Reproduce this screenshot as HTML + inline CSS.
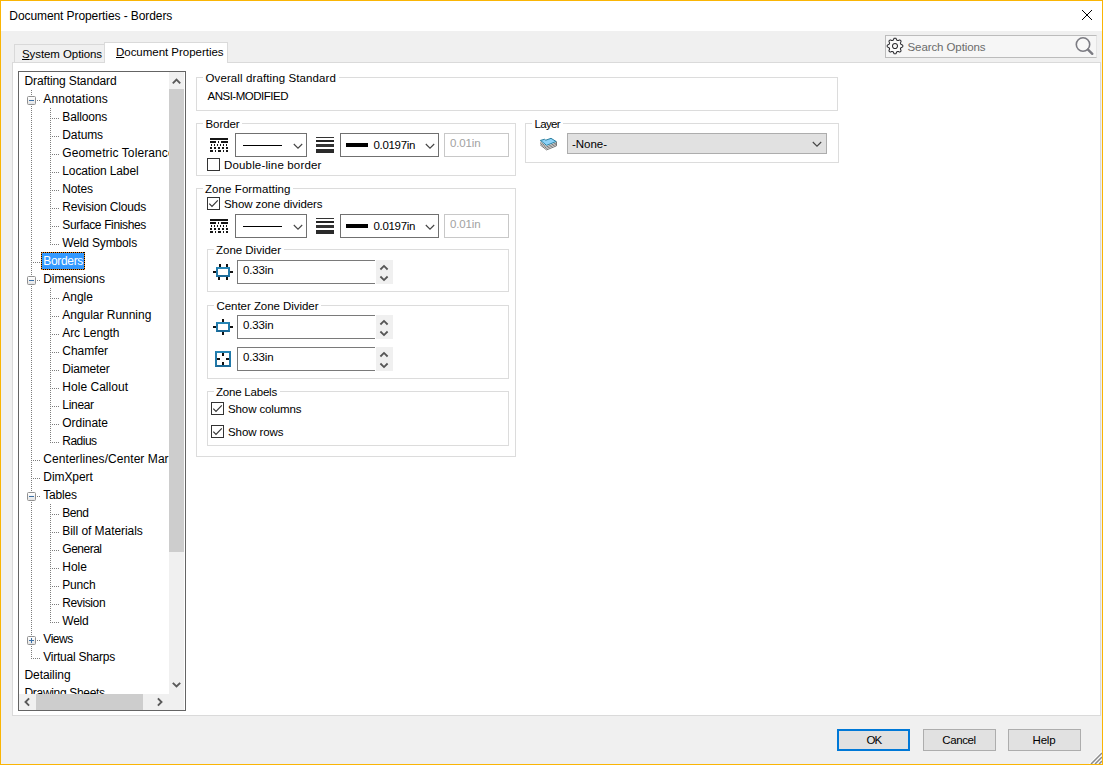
<!DOCTYPE html>
<html><head><meta charset="utf-8"><title>Document Properties - Borders</title>
<style>
html,body{margin:0;padding:0;}
body{width:1103px;height:765px;overflow:hidden;background:#f0f0f0;font-family:"Liberation Sans", Arial, sans-serif;font-size:12px;position:relative;}
div,span,svg{position:absolute;box-sizing:border-box;}
.t{white-space:pre;line-height:16px;height:16px;}
.t u{position:static;text-decoration:underline;text-underline-offset:1px;}
.gb{border:1px solid #dcdcdc;}
.lab{background:#fff;height:3px;}
.combo{border:1px solid #707070;background:#fff;}
.dis{border:1px solid #c8c8c8;background:#fff;}
.spin{border:1px solid #7a7a7a;border-right:none;background:#fff;}
.spb{background:#f0f0f0;}
.cb{border:1px solid #333;background:#fff;width:13px;height:13px;}
.btn{border:1px solid #adadad;background:#e1e1e1;}
</style></head><body>

<div style="left:0;top:0;width:1103px;height:765px;border:1px solid #fab505;"></div>
<div style="left:1px;top:1px;width:1101px;height:30px;background:#fff;"></div>
<svg style="left:1081px;top:9px" width="12" height="12" viewBox="0 0 12 12"><path d="M1 1 L11 11 M11 1 L1 11" stroke="#000" stroke-width="1" fill="none"/></svg>
<div style="left:885px;top:35px;width:212px;height:23px;border:1px solid #bcbcbc;border-right-color:#e4e4e4;background:#f6f6f6;"></div>
<svg style="left:886px;top:37px" width="18" height="18" viewBox="-9 -9 18 18">
<path id="gear" fill="#fbfbfb" stroke="#2a2a2e" stroke-width="1.05" stroke-linejoin="round" d="M0.00 7.80 L-0.31 7.79 L-0.61 7.78 L-0.90 7.65 L-1.15 7.25 L-1.36 6.82 L-1.53 6.37 L-1.68 5.97 L-1.89 5.80 L-2.11 5.72 L-2.33 5.64 L-2.55 5.54 L-2.77 5.44 L-3.03 5.41 L-3.43 5.59 L-3.86 5.78 L-4.32 5.94 L-4.77 6.05 L-5.07 5.93 L-5.29 5.73 L-5.52 5.52 L-5.73 5.29 L-5.93 5.07 L-6.05 4.77 L-5.94 4.32 L-5.78 3.86 L-5.59 3.43 L-5.41 3.03 L-5.44 2.77 L-5.54 2.55 L-5.64 2.33 L-5.72 2.11 L-5.80 1.89 L-5.97 1.68 L-6.37 1.53 L-6.82 1.36 L-7.25 1.15 L-7.65 0.90 L-7.78 0.61 L-7.79 0.31 L-7.80 0.00 L-7.79 -0.31 L-7.78 -0.61 L-7.65 -0.90 L-7.25 -1.15 L-6.82 -1.36 L-6.37 -1.53 L-5.97 -1.68 L-5.80 -1.89 L-5.72 -2.11 L-5.64 -2.33 L-5.54 -2.55 L-5.44 -2.77 L-5.41 -3.03 L-5.59 -3.43 L-5.78 -3.86 L-5.94 -4.32 L-6.05 -4.77 L-5.93 -5.07 L-5.73 -5.29 L-5.52 -5.52 L-5.29 -5.73 L-5.07 -5.93 L-4.77 -6.05 L-4.32 -5.94 L-3.86 -5.78 L-3.43 -5.59 L-3.03 -5.41 L-2.77 -5.44 L-2.55 -5.54 L-2.33 -5.64 L-2.11 -5.72 L-1.89 -5.80 L-1.68 -5.97 L-1.53 -6.37 L-1.36 -6.82 L-1.15 -7.25 L-0.90 -7.65 L-0.61 -7.78 L-0.31 -7.79 L-0.00 -7.80 L0.31 -7.79 L0.61 -7.78 L0.90 -7.65 L1.15 -7.25 L1.36 -6.82 L1.53 -6.37 L1.68 -5.97 L1.89 -5.80 L2.11 -5.72 L2.33 -5.64 L2.55 -5.54 L2.77 -5.44 L3.03 -5.41 L3.43 -5.59 L3.86 -5.78 L4.32 -5.94 L4.77 -6.05 L5.07 -5.93 L5.29 -5.73 L5.52 -5.52 L5.73 -5.29 L5.93 -5.07 L6.05 -4.77 L5.94 -4.32 L5.78 -3.86 L5.59 -3.43 L5.41 -3.03 L5.44 -2.77 L5.54 -2.55 L5.64 -2.33 L5.72 -2.11 L5.80 -1.89 L5.97 -1.68 L6.37 -1.53 L6.82 -1.36 L7.25 -1.15 L7.65 -0.90 L7.78 -0.61 L7.79 -0.31 L7.80 -0.00 L7.79 0.31 L7.78 0.61 L7.65 0.90 L7.25 1.15 L6.82 1.36 L6.37 1.53 L5.97 1.68 L5.80 1.89 L5.72 2.11 L5.64 2.33 L5.54 2.55 L5.44 2.77 L5.41 3.03 L5.59 3.43 L5.78 3.86 L5.94 4.32 L6.05 4.77 L5.93 5.07 L5.73 5.29 L5.52 5.52 L5.29 5.73 L5.07 5.93 L4.77 6.05 L4.32 5.94 L3.86 5.78 L3.43 5.59 L3.03 5.41 L2.77 5.44 L2.55 5.54 L2.33 5.64 L2.11 5.72 L1.89 5.80 L1.68 5.97 L1.53 6.37 L1.36 6.82 L1.15 7.25 L0.90 7.65 L0.61 7.78 L0.31 7.79 Z"/>
<circle cx="0" cy="0" r="2.5" fill="#f8f8f8" stroke="#2a2a2e" stroke-width="1.05"/></svg>
<svg style="left:1072px;top:35px" width="24" height="24" viewBox="0 0 24 24"><circle cx="11" cy="9.5" r="6.7" fill="#f8f8f8" stroke="#7b7b82" stroke-width="1.6"/><path d="M16 14.6 L20.3 18.8" stroke="#7b7b82" stroke-width="2.4" stroke-linecap="round"/></svg>
<div style="left:14px;top:44px;width:91px;height:19px;border:1px solid #d9d9d9;background:#f0f0f0;"></div>
<div style="left:12px;top:62px;width:1089px;height:654px;border:1px solid #dadada;background:#fff;"></div>
<div style="left:104px;top:42px;width:124px;height:21px;border:1px solid #dadada;border-bottom:none;background:#fff;"></div>
<div style="left:18px;top:71px;width:168px;height:640px;border:1px solid #646464;background:#fff;"></div>
<div style="left:19px;top:72px;width:150px;height:622px;overflow:hidden;">
<div style="left:12px;top:18px;width:1px;height:569px;background:repeating-linear-gradient(to bottom,#7d7d7d 0 1px,transparent 1px 2px);"></div>
<div style="left:31px;top:36px;width:1px;height:137px;background:repeating-linear-gradient(to bottom,#7d7d7d 0 1px,transparent 1px 2px);"></div>
<div style="left:31px;top:216px;width:1px;height:155px;background:repeating-linear-gradient(to bottom,#7d7d7d 0 1px,transparent 1px 2px);"></div>
<div style="left:31px;top:432px;width:1px;height:119px;background:repeating-linear-gradient(to bottom,#7d7d7d 0 1px,transparent 1px 2px);"></div>
<div style="left:18px;top:28px;width:3px;height:1px;background:repeating-linear-gradient(to right,#7d7d7d 0 1px,transparent 1px 2px);"></div>
<div style="left:31px;top:46px;width:9px;height:1px;background:repeating-linear-gradient(to right,#7d7d7d 0 1px,transparent 1px 2px);"></div>
<div style="left:31px;top:64px;width:9px;height:1px;background:repeating-linear-gradient(to right,#7d7d7d 0 1px,transparent 1px 2px);"></div>
<div style="left:31px;top:82px;width:9px;height:1px;background:repeating-linear-gradient(to right,#7d7d7d 0 1px,transparent 1px 2px);"></div>
<div style="left:31px;top:100px;width:9px;height:1px;background:repeating-linear-gradient(to right,#7d7d7d 0 1px,transparent 1px 2px);"></div>
<div style="left:31px;top:118px;width:9px;height:1px;background:repeating-linear-gradient(to right,#7d7d7d 0 1px,transparent 1px 2px);"></div>
<div style="left:31px;top:136px;width:9px;height:1px;background:repeating-linear-gradient(to right,#7d7d7d 0 1px,transparent 1px 2px);"></div>
<div style="left:31px;top:154px;width:9px;height:1px;background:repeating-linear-gradient(to right,#7d7d7d 0 1px,transparent 1px 2px);"></div>
<div style="left:31px;top:172px;width:9px;height:1px;background:repeating-linear-gradient(to right,#7d7d7d 0 1px,transparent 1px 2px);"></div>
<div style="left:14px;top:190px;width:7px;height:1px;background:repeating-linear-gradient(to right,#7d7d7d 0 1px,transparent 1px 2px);"></div>
<div style="left:18px;top:208px;width:3px;height:1px;background:repeating-linear-gradient(to right,#7d7d7d 0 1px,transparent 1px 2px);"></div>
<div style="left:31px;top:226px;width:9px;height:1px;background:repeating-linear-gradient(to right,#7d7d7d 0 1px,transparent 1px 2px);"></div>
<div style="left:31px;top:244px;width:9px;height:1px;background:repeating-linear-gradient(to right,#7d7d7d 0 1px,transparent 1px 2px);"></div>
<div style="left:31px;top:262px;width:9px;height:1px;background:repeating-linear-gradient(to right,#7d7d7d 0 1px,transparent 1px 2px);"></div>
<div style="left:31px;top:280px;width:9px;height:1px;background:repeating-linear-gradient(to right,#7d7d7d 0 1px,transparent 1px 2px);"></div>
<div style="left:31px;top:298px;width:9px;height:1px;background:repeating-linear-gradient(to right,#7d7d7d 0 1px,transparent 1px 2px);"></div>
<div style="left:31px;top:316px;width:9px;height:1px;background:repeating-linear-gradient(to right,#7d7d7d 0 1px,transparent 1px 2px);"></div>
<div style="left:31px;top:334px;width:9px;height:1px;background:repeating-linear-gradient(to right,#7d7d7d 0 1px,transparent 1px 2px);"></div>
<div style="left:31px;top:352px;width:9px;height:1px;background:repeating-linear-gradient(to right,#7d7d7d 0 1px,transparent 1px 2px);"></div>
<div style="left:31px;top:370px;width:9px;height:1px;background:repeating-linear-gradient(to right,#7d7d7d 0 1px,transparent 1px 2px);"></div>
<div style="left:14px;top:388px;width:7px;height:1px;background:repeating-linear-gradient(to right,#7d7d7d 0 1px,transparent 1px 2px);"></div>
<div style="left:14px;top:406px;width:7px;height:1px;background:repeating-linear-gradient(to right,#7d7d7d 0 1px,transparent 1px 2px);"></div>
<div style="left:18px;top:424px;width:3px;height:1px;background:repeating-linear-gradient(to right,#7d7d7d 0 1px,transparent 1px 2px);"></div>
<div style="left:31px;top:442px;width:9px;height:1px;background:repeating-linear-gradient(to right,#7d7d7d 0 1px,transparent 1px 2px);"></div>
<div style="left:31px;top:460px;width:9px;height:1px;background:repeating-linear-gradient(to right,#7d7d7d 0 1px,transparent 1px 2px);"></div>
<div style="left:31px;top:478px;width:9px;height:1px;background:repeating-linear-gradient(to right,#7d7d7d 0 1px,transparent 1px 2px);"></div>
<div style="left:31px;top:496px;width:9px;height:1px;background:repeating-linear-gradient(to right,#7d7d7d 0 1px,transparent 1px 2px);"></div>
<div style="left:31px;top:514px;width:9px;height:1px;background:repeating-linear-gradient(to right,#7d7d7d 0 1px,transparent 1px 2px);"></div>
<div style="left:31px;top:532px;width:9px;height:1px;background:repeating-linear-gradient(to right,#7d7d7d 0 1px,transparent 1px 2px);"></div>
<div style="left:31px;top:550px;width:9px;height:1px;background:repeating-linear-gradient(to right,#7d7d7d 0 1px,transparent 1px 2px);"></div>
<div style="left:18px;top:568px;width:3px;height:1px;background:repeating-linear-gradient(to right,#7d7d7d 0 1px,transparent 1px 2px);"></div>
<div style="left:14px;top:586px;width:7px;height:1px;background:repeating-linear-gradient(to right,#7d7d7d 0 1px,transparent 1px 2px);"></div>
<div style="left:22px;top:180px;width:44px;height:18px;background:#3399ff;"></div>
<div style="left:22px;top:180px;width:44px;height:1px;background:repeating-linear-gradient(to right,#000 0 1px,#ef8a1e 1px 2px);"></div>
<div style="left:22px;top:197px;width:44px;height:1px;background:repeating-linear-gradient(to right,#000 0 1px,#ef8a1e 1px 2px);"></div>
<div style="left:22px;top:180px;width:1px;height:18px;background:repeating-linear-gradient(to bottom,#000 0 1px,#ef8a1e 1px 2px);"></div>
<div style="left:65px;top:180px;width:1px;height:18px;background:repeating-linear-gradient(to bottom,#000 0 1px,#ef8a1e 1px 2px);"></div>
<div style="left:8px;top:24px;width:9px;height:9px;border:1px solid #919191;border-radius:1.5px;background:linear-gradient(#fff,#e4e4e4);"><div style="left:1px;top:3px;width:5px;height:1px;background:#3a6ea5;"></div></div>
<div style="left:8px;top:204px;width:9px;height:9px;border:1px solid #919191;border-radius:1.5px;background:linear-gradient(#fff,#e4e4e4);"><div style="left:1px;top:3px;width:5px;height:1px;background:#3a6ea5;"></div></div>
<div style="left:8px;top:420px;width:9px;height:9px;border:1px solid #919191;border-radius:1.5px;background:linear-gradient(#fff,#e4e4e4);"><div style="left:1px;top:3px;width:5px;height:1px;background:#3a6ea5;"></div></div>
<div style="left:8px;top:564px;width:9px;height:9px;border:1px solid #919191;border-radius:1.5px;background:linear-gradient(#fff,#e4e4e4);"><div style="left:1px;top:3px;width:5px;height:1px;background:#3a6ea5;"></div><div style="left:3px;top:1px;width:1px;height:5px;background:#3a6ea5;"></div></div>
<span class="t" style="left:5.50px;top:1.00px;color:#000;letter-spacing:-0.121px;font-size:12px">Drafting Standard</span>
<span class="t" style="left:24.30px;top:19.00px;color:#000;letter-spacing:0.119px;font-size:12px">Annotations</span>
<span class="t" style="left:43.30px;top:37.00px;color:#000;letter-spacing:-0.166px;font-size:12px">Balloons</span>
<span class="t" style="left:43.30px;top:55.00px;color:#000;letter-spacing:-0.107px;font-size:12px">Datums</span>
<span class="t" style="left:43.30px;top:73.00px;color:#000;letter-spacing:0.100px;font-size:12px">Geometric Tolerances</span>
<span class="t" style="left:43.30px;top:91.00px;color:#000;letter-spacing:-0.134px;font-size:12px">Location Label</span>
<span class="t" style="left:43.30px;top:109.00px;color:#000;letter-spacing:-0.172px;font-size:12px">Notes</span>
<span class="t" style="left:43.30px;top:127.00px;color:#000;letter-spacing:-0.201px;font-size:12px">Revision Clouds</span>
<span class="t" style="left:43.30px;top:145.00px;color:#000;letter-spacing:-0.355px;font-size:12px">Surface Finishes</span>
<span class="t" style="left:43.30px;top:163.00px;color:#000;letter-spacing:-0.149px;font-size:12px">Weld Symbols</span>
<span class="t" style="left:24.30px;top:181.00px;color:#fff;letter-spacing:-0.333px;font-size:12px">Borders</span>
<span class="t" style="left:24.30px;top:199.00px;color:#000;letter-spacing:-0.120px;font-size:12px">Dimensions</span>
<span class="t" style="left:43.30px;top:217.00px;color:#000;letter-spacing:-0.041px;font-size:12px">Angle</span>
<span class="t" style="left:43.30px;top:235.00px;color:#000;letter-spacing:-0.027px;font-size:12px">Angular Running</span>
<span class="t" style="left:43.30px;top:253.00px;color:#000;letter-spacing:-0.095px;font-size:12px">Arc Length</span>
<span class="t" style="left:43.30px;top:271.00px;color:#000;letter-spacing:-0.045px;font-size:12px">Chamfer</span>
<span class="t" style="left:43.30px;top:289.00px;color:#000;letter-spacing:-0.173px;font-size:12px">Diameter</span>
<span class="t" style="left:43.30px;top:307.00px;color:#000;letter-spacing:0.027px;font-size:12px">Hole Callout</span>
<span class="t" style="left:43.30px;top:325.00px;color:#000;letter-spacing:-0.310px;font-size:12px">Linear</span>
<span class="t" style="left:43.30px;top:343.00px;color:#000;letter-spacing:-0.041px;font-size:12px">Ordinate</span>
<span class="t" style="left:43.30px;top:361.00px;color:#000;letter-spacing:-0.510px;font-size:12px">Radius</span>
<span class="t" style="left:24.30px;top:379.00px;color:#000;letter-spacing:0.060px;font-size:12px">Centerlines/Center Marks</span>
<span class="t" style="left:24.30px;top:397.00px;color:#000;letter-spacing:-0.064px;font-size:12px">DimXpert</span>
<span class="t" style="left:24.30px;top:415.00px;color:#000;letter-spacing:-0.215px;font-size:12px">Tables</span>
<span class="t" style="left:43.30px;top:433.00px;color:#000;letter-spacing:-0.483px;font-size:12px">Bend</span>
<span class="t" style="left:43.30px;top:451.00px;color:#000;letter-spacing:-0.051px;font-size:12px">Bill of Materials</span>
<span class="t" style="left:43.30px;top:469.00px;color:#000;letter-spacing:-0.500px;font-size:12px">General</span>
<span class="t" style="left:43.30px;top:487.00px;color:#000;letter-spacing:-0.047px;font-size:12px">Hole</span>
<span class="t" style="left:43.30px;top:505.00px;color:#000;letter-spacing:-0.186px;font-size:12px">Punch</span>
<span class="t" style="left:43.30px;top:523.00px;color:#000;letter-spacing:-0.391px;font-size:12px">Revision</span>
<span class="t" style="left:43.30px;top:541.00px;color:#000;letter-spacing:-0.256px;font-size:12px">Weld</span>
<span class="t" style="left:24.30px;top:559.00px;color:#000;letter-spacing:-0.439px;font-size:12px">Views</span>
<span class="t" style="left:24.30px;top:577.00px;color:#000;letter-spacing:-0.254px;font-size:12px">Virtual Sharps</span>
<span class="t" style="left:5.50px;top:595.00px;color:#000;letter-spacing:-0.078px;font-size:12px">Detailing</span>
<span class="t" style="left:5.50px;top:613.00px;color:#000;letter-spacing:-0.316px;font-size:12px">Drawing Sheets</span>
</div>
<div style="left:169px;top:72px;width:15px;height:622px;background:#f0f0f0;"></div>
<div style="left:169px;top:89px;width:15px;height:463px;background:#cdcdcd;"></div>
<svg style="left:169px;top:72px" width="15" height="17" viewBox="0 0 15 17"><path d="M3.8 11.3 L7.5 7.6 L11.2 11.3" stroke="#5a5a5a" stroke-width="1.9" fill="none"/></svg>
<svg style="left:169px;top:677px" width="15" height="17" viewBox="0 0 15 17"><path d="M3.8 5.8 L7.5 9.5 L11.2 5.8" stroke="#5a5a5a" stroke-width="1.9" fill="none"/></svg>
<div style="left:19px;top:694px;width:165px;height:16px;background:#f0f0f0;"></div>
<div style="left:36px;top:694px;width:107px;height:16px;background:#cdcdcd;"></div>
<svg style="left:19px;top:694px" width="17" height="16" viewBox="0 0 17 16"><path d="M10.1 4.4 L6.5 8 L10.1 11.6" stroke="#5a5a5a" stroke-width="1.9" fill="none"/></svg>
<svg style="left:152px;top:694px" width="17" height="16" viewBox="0 0 17 16"><path d="M5.9 4.4 L9.5 8 L5.9 11.6" stroke="#5a5a5a" stroke-width="1.9" fill="none"/></svg>
<div class="gb" style="left:196px;top:77px;width:642px;height:34px;"></div>
<div class="lab" style="left:203px;top:76px;width:136px;"></div>
<div class="gb" style="left:196px;top:123px;width:320px;height:53px;"></div>
<div class="lab" style="left:203px;top:122px;width:39px;"></div>
<div class="gb" style="left:525px;top:123px;width:314px;height:40px;"></div>
<div class="lab" style="left:532px;top:122px;width:31px;"></div>
<div class="gb" style="left:196px;top:188px;width:320px;height:269px;"></div>
<div class="lab" style="left:203px;top:187px;width:90px;"></div>
<div class="gb" style="left:207px;top:249px;width:302px;height:43px;"></div>
<div class="lab" style="left:214px;top:248px;width:70px;"></div>
<div class="gb" style="left:207px;top:305px;width:302px;height:74px;"></div>
<div class="lab" style="left:214px;top:304px;width:107px;"></div>
<div class="gb" style="left:207px;top:391px;width:302px;height:55px;"></div>
<div class="lab" style="left:214px;top:390px;width:66px;"></div>
<svg style="left:210px;top:138px" width="18" height="14" viewBox="0 0 18 14" shape-rendering="crispEdges"><rect x="0" y="0" width="18" height="2" fill="#161616"/><rect x="0" y="3" width="6" height="2" fill="#161616"/><rect x="8" y="3" width="1" height="2" fill="#161616"/><rect x="11" y="3" width="7" height="2" fill="#161616"/><rect x="1" y="6" width="1" height="2" fill="#161616"/><rect x="4" y="6" width="1" height="2" fill="#161616"/><rect x="7" y="6" width="1" height="2" fill="#161616"/><rect x="10" y="6" width="1" height="2" fill="#161616"/><rect x="13" y="6" width="1" height="2" fill="#161616"/><rect x="16" y="6" width="1" height="2" fill="#161616"/><rect x="0" y="9" width="2" height="2" fill="#161616"/><rect x="4" y="9" width="2" height="2" fill="#161616"/><rect x="8" y="9" width="2" height="2" fill="#161616"/><rect x="12" y="9" width="2" height="2" fill="#161616"/><rect x="16" y="9" width="2" height="2" fill="#161616"/><rect x="0" y="12" width="3" height="2" fill="#161616"/><rect x="5" y="12" width="1" height="2" fill="#161616"/><rect x="8" y="12" width="3" height="2" fill="#161616"/><rect x="13" y="12" width="1" height="2" fill="#161616"/><rect x="16" y="12" width="2" height="2" fill="#161616"/></svg>
<div class="combo" style="left:235px;top:133px;width:72px;height:24px;"></div>
<div style="left:243px;top:145px;width:39px;height:1px;background:#000;"></div>
<svg style="left:293px;top:143px" width="10" height="7" viewBox="0 0 10 7"><path d="M0.8 1 L5 5.2 L9.2 1" stroke="#444" stroke-width="1.1" fill="none"/></svg>
<svg style="left:316px;top:137px" width="18" height="16" viewBox="0 0 18 16" shape-rendering="crispEdges"><rect x="0" y="0" width="18" height="1" fill="#333"/><rect x="0" y="3" width="18" height="2" fill="#222"/><rect x="0" y="7" width="18" height="3" fill="#333"/><rect x="0" y="12" width="18" height="4" fill="#2a2a2a"/></svg>
<div class="combo" style="left:340px;top:133px;width:99px;height:24px;"></div>
<div style="left:346px;top:143px;width:22px;height:4px;background:#000;"></div>
<svg style="left:425px;top:143px" width="10" height="7" viewBox="0 0 10 7"><path d="M0.8 1 L5 5.2 L9.2 1" stroke="#444" stroke-width="1.1" fill="none"/></svg>
<div class="dis" style="left:444px;top:133px;width:65px;height:24px;"></div>
<svg style="left:210px;top:219px" width="18" height="14" viewBox="0 0 18 14" shape-rendering="crispEdges"><rect x="0" y="0" width="18" height="2" fill="#161616"/><rect x="0" y="3" width="6" height="2" fill="#161616"/><rect x="8" y="3" width="1" height="2" fill="#161616"/><rect x="11" y="3" width="7" height="2" fill="#161616"/><rect x="1" y="6" width="1" height="2" fill="#161616"/><rect x="4" y="6" width="1" height="2" fill="#161616"/><rect x="7" y="6" width="1" height="2" fill="#161616"/><rect x="10" y="6" width="1" height="2" fill="#161616"/><rect x="13" y="6" width="1" height="2" fill="#161616"/><rect x="16" y="6" width="1" height="2" fill="#161616"/><rect x="0" y="9" width="2" height="2" fill="#161616"/><rect x="4" y="9" width="2" height="2" fill="#161616"/><rect x="8" y="9" width="2" height="2" fill="#161616"/><rect x="12" y="9" width="2" height="2" fill="#161616"/><rect x="16" y="9" width="2" height="2" fill="#161616"/><rect x="0" y="12" width="3" height="2" fill="#161616"/><rect x="5" y="12" width="1" height="2" fill="#161616"/><rect x="8" y="12" width="3" height="2" fill="#161616"/><rect x="13" y="12" width="1" height="2" fill="#161616"/><rect x="16" y="12" width="2" height="2" fill="#161616"/></svg>
<div class="combo" style="left:235px;top:214px;width:72px;height:24px;"></div>
<div style="left:243px;top:226px;width:39px;height:1px;background:#000;"></div>
<svg style="left:293px;top:224px" width="10" height="7" viewBox="0 0 10 7"><path d="M0.8 1 L5 5.2 L9.2 1" stroke="#444" stroke-width="1.1" fill="none"/></svg>
<svg style="left:316px;top:218px" width="18" height="16" viewBox="0 0 18 16" shape-rendering="crispEdges"><rect x="0" y="0" width="18" height="1" fill="#333"/><rect x="0" y="3" width="18" height="2" fill="#222"/><rect x="0" y="7" width="18" height="3" fill="#333"/><rect x="0" y="12" width="18" height="4" fill="#2a2a2a"/></svg>
<div class="combo" style="left:340px;top:214px;width:99px;height:24px;"></div>
<div style="left:346px;top:224px;width:22px;height:4px;background:#000;"></div>
<svg style="left:425px;top:224px" width="10" height="7" viewBox="0 0 10 7"><path d="M0.8 1 L5 5.2 L9.2 1" stroke="#444" stroke-width="1.1" fill="none"/></svg>
<div class="dis" style="left:444px;top:214px;width:65px;height:24px;"></div>
<div class="cb" style="left:207px;top:158px;"></div>
<div class="cb" style="left:207px;top:197px;"></div>
<svg style="left:207px;top:197px" width="13" height="13" viewBox="0 0 13 13"><path d="M2.3 6.6 L5 9.4 L10.8 3.3" stroke="#333" stroke-width="1.15" fill="none"/></svg>
<div class="cb" style="left:211px;top:402px;"></div>
<svg style="left:211px;top:402px" width="13" height="13" viewBox="0 0 13 13"><path d="M2.3 6.6 L5 9.4 L10.8 3.3" stroke="#333" stroke-width="1.15" fill="none"/></svg>
<div class="cb" style="left:211px;top:425px;"></div>
<svg style="left:211px;top:425px" width="13" height="13" viewBox="0 0 13 13"><path d="M2.3 6.6 L5 9.4 L10.8 3.3" stroke="#333" stroke-width="1.15" fill="none"/></svg>
<div style="left:567px;top:133px;width:260px;height:21px;border:1px solid #adadad;background:#e1e1e1;"></div>
<svg style="left:812px;top:141px" width="10" height="7" viewBox="0 0 10 7"><path d="M0.8 1 L5 5.2 L9.2 1" stroke="#444" stroke-width="1.1" fill="none"/></svg>
<svg style="left:538px;top:136px" width="22" height="16" viewBox="0 0 22 16">
<path d="M2.2 8.9 L8.6 13.9 L18.4 9.9 L18.4 8" fill="#fff" stroke="#3c3c3c" stroke-width="0.7"/>
<path d="M2.2 7.4 L8.6 12.4 L18.4 8.4 L18.4 6.6" fill="#fff" stroke="#3c3c3c" stroke-width="0.7"/>
<path d="M2.2 5.9 L8.6 10.9 L18.4 6.9 L18.4 5.5" fill="#fff" stroke="#3c3c3c" stroke-width="0.7"/>
<path d="M2.4 4.4 L6.5 3.3 L7.8 4.2 L13 2.3 L18.2 5.5 L8.6 9.4 Z" fill="#8dd2f8" stroke="#1b7494" stroke-width="0.9" stroke-linejoin="round"/>
</svg>
<div class="spin" style="left:237px;top:260px;width:138px;height:24px;"></div>
<div class="spb" style="left:376px;top:260px;width:17px;height:24px;"></div>
<svg style="left:376px;top:260px" width="17" height="24" viewBox="0 0 17 24"><path d="M4.4 9.5 L8 5.9 L11.6 9.5 M4.4 16.5 L8 20.1 L11.6 16.5" stroke="#555" stroke-width="1.8" fill="none"/></svg>
<div class="spin" style="left:237px;top:315px;width:138px;height:24px;"></div>
<div class="spb" style="left:376px;top:315px;width:17px;height:24px;"></div>
<svg style="left:376px;top:315px" width="17" height="24" viewBox="0 0 17 24"><path d="M4.4 9.5 L8 5.9 L11.6 9.5 M4.4 16.5 L8 20.1 L11.6 16.5" stroke="#555" stroke-width="1.8" fill="none"/></svg>
<div class="spin" style="left:237px;top:347px;width:138px;height:24px;"></div>
<div class="spb" style="left:376px;top:347px;width:17px;height:24px;"></div>
<svg style="left:376px;top:347px" width="17" height="24" viewBox="0 0 17 24"><path d="M4.4 9.5 L8 5.9 L11.6 9.5 M4.4 16.5 L8 20.1 L11.6 16.5" stroke="#555" stroke-width="1.8" fill="none"/></svg>
<div style="left:216px;top:267px;width:14px;height:10px;border:2px solid #2179a9;border-top-color:#2686b6;border-bottom-color:#1b6a98;background:#fff;"></div>
<div style="left:213px;top:271px;width:3px;height:2px;background:#111;"></div><div style="left:230px;top:271px;width:3px;height:2px;background:#111;"></div><div style="left:219px;top:264px;width:2px;height:3px;background:#111;"></div><div style="left:226px;top:264px;width:2px;height:3px;background:#111;"></div><div style="left:218px;top:277px;width:2px;height:3px;background:#111;"></div><div style="left:226px;top:277px;width:2px;height:3px;background:#111;"></div>
<div style="left:216px;top:322px;width:14px;height:10px;border:2px solid #2179a9;border-top-color:#2686b6;border-bottom-color:#1b6a98;background:#fff;"></div>
<div style="left:213px;top:326px;width:3px;height:2px;background:#111;"></div><div style="left:230px;top:326px;width:3px;height:2px;background:#111;"></div><div style="left:222px;top:319px;width:2px;height:3px;background:#111;"></div><div style="left:222px;top:332px;width:2px;height:3px;background:#111;"></div>
<div style="left:215px;top:351px;width:16px;height:16px;border:2px solid #2179a9;border-top-color:#2686b6;border-bottom-color:#1b6a98;background:#fff;"></div>
<div style="left:217px;top:358px;width:3px;height:2px;background:#111;"></div><div style="left:226px;top:358px;width:3px;height:2px;background:#111;"></div><div style="left:222px;top:353px;width:2px;height:3px;background:#111;"></div><div style="left:222px;top:362px;width:2px;height:3px;background:#111;"></div>
<div class="btn" style="left:837px;top:729px;width:73px;height:22px;border:2px solid #0078d7;"></div>
<div class="btn" style="left:923px;top:729px;width:73px;height:22px;"></div>
<div class="btn" style="left:1008px;top:729px;width:73px;height:22px;"></div>
<svg style="left:1088px;top:750px" width="14" height="14" viewBox="0 0 14 14"><defs><clipPath id="gc"><rect x="0" y="0" width="14" height="14"/></clipPath></defs><g clip-path="url(#gc)"><path d="M1.6 14 L14 1.6 M5.6 14 L14 5.6 M9.6 14 L14 9.6" stroke="#fff" stroke-width="1.3" fill="none"/><path d="M3 14 L14 3 M7 14 L14 7 M11 14 L14 11" stroke="#8c8c8c" stroke-width="1.5" fill="none"/></g></svg>
<span class="t" style="left:9.30px;top:8.00px;color:#000;letter-spacing:-0.083px;font-size:12px">Document Properties - Borders</span>
<span class="t" style="left:22.00px;top:45.50px;color:#000;letter-spacing:-0.084px;font-size:11.5px"><u>S</u>ystem Options</span>
<span class="t" style="left:116.00px;top:44.00px;color:#000;letter-spacing:-0.028px;font-size:11.5px"><u>D</u>ocument Properties</span>
<span class="t" style="left:907.50px;top:39.00px;color:#6b6b6b;letter-spacing:-0.090px;font-size:11.5px">Search Options</span>
<span class="t" style="left:866.50px;top:732.00px;color:#000;letter-spacing:-1.062px;font-size:11.5px">OK</span>
<span class="t" style="left:942.30px;top:732.00px;color:#000;letter-spacing:-0.385px;font-size:11.5px">Cancel</span>
<span class="t" style="left:1032.50px;top:732.00px;color:#000;letter-spacing:-0.164px;font-size:11.5px">Help</span>
<span class="t" style="left:205.50px;top:70.00px;color:#000;letter-spacing:0.106px;font-size:11.5px">Overall drafting Standard</span>
<span class="t" style="left:207.50px;top:88.00px;color:#000;letter-spacing:-0.492px;font-size:11.5px">ANSI-MODIFIED</span>
<span class="t" style="left:205.50px;top:116.00px;color:#000;letter-spacing:-0.089px;font-size:11.5px">Border</span>
<span class="t" style="left:534.50px;top:116.00px;color:#000;letter-spacing:-0.656px;font-size:11.5px">Layer</span>
<span class="t" style="left:572.00px;top:136.00px;color:#000;letter-spacing:-0.026px;font-size:11.5px">-None-</span>
<span class="t" style="left:373.50px;top:137.00px;color:#000;letter-spacing:-0.328px;font-size:11.5px">0.0197in</span>
<span class="t" style="left:450.00px;top:135.00px;color:#a2a2a2;letter-spacing:-0.141px;font-size:11.5px">0.01in</span>
<span class="t" style="left:224.00px;top:157.00px;color:#000;letter-spacing:0.160px;font-size:11.5px">Double-line border</span>
<span class="t" style="left:205.00px;top:181.00px;color:#000;letter-spacing:0.075px;font-size:11.5px">Zone Formatting</span>
<span class="t" style="left:224.00px;top:196.00px;color:#000;letter-spacing:-0.069px;font-size:11.5px">Show zone dividers</span>
<span class="t" style="left:373.50px;top:218.00px;color:#000;letter-spacing:-0.328px;font-size:11.5px">0.0197in</span>
<span class="t" style="left:450.00px;top:216.00px;color:#a2a2a2;letter-spacing:-0.141px;font-size:11.5px">0.01in</span>
<span class="t" style="left:216.00px;top:242.00px;color:#000;letter-spacing:-0.017px;font-size:11.5px">Zone Divider</span>
<span class="t" style="left:243.00px;top:262.00px;color:#000;letter-spacing:-0.141px;font-size:11.5px">0.33in</span>
<span class="t" style="left:216.50px;top:298.00px;color:#000;letter-spacing:-0.048px;font-size:11.5px">Center Zone Divider</span>
<span class="t" style="left:243.00px;top:317.00px;color:#000;letter-spacing:-0.141px;font-size:11.5px">0.33in</span>
<span class="t" style="left:243.00px;top:349.00px;color:#000;letter-spacing:-0.141px;font-size:11.5px">0.33in</span>
<span class="t" style="left:216.00px;top:384.00px;color:#000;letter-spacing:-0.209px;font-size:11.5px">Zone Labels</span>
<span class="t" style="left:228.00px;top:401.00px;color:#000;letter-spacing:-0.108px;font-size:11.5px">Show columns</span>
<span class="t" style="left:228.00px;top:424.00px;color:#000;letter-spacing:-0.083px;font-size:11.5px">Show rows</span>
</body></html>
